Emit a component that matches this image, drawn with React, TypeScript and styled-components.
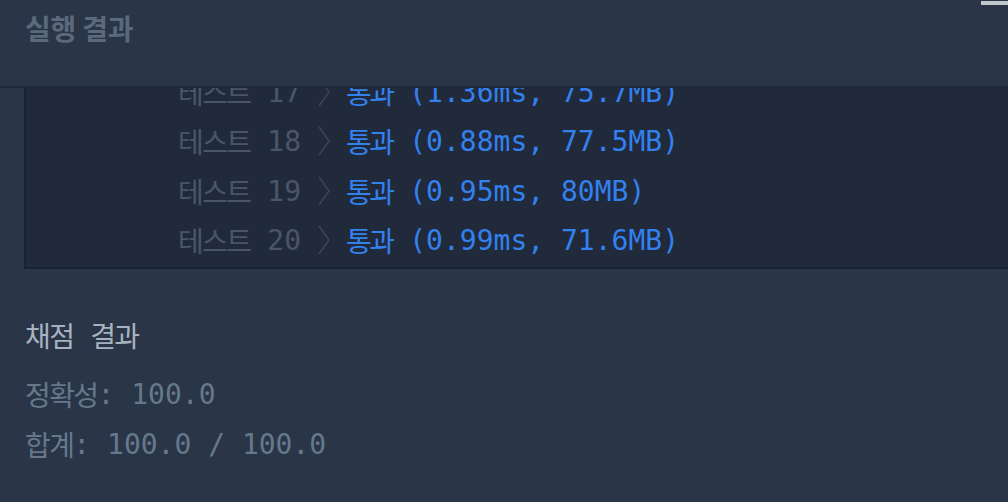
import React from 'react';
import styled, { createGlobalStyle } from 'styled-components';

const GlobalStyle = createGlobalStyle`
    html, body {
        margin: 0;
        padding: 0;
        background: #2a3547;
    }
    #root {
        height: 502px;
        overflow: hidden;
    }
`;

const MONO = `'DejaVu Sans Mono', 'Noto Sans CJK KR', monospace`;

const Page = styled.div`
    position: relative;
    display: flex;
    flex-direction: column;
    width: 1008px;
    height: 502px;
    background: #2a3547;
    overflow: hidden;
`;

const ScrollThumb = styled.div`
    position: absolute;
    top: 1px;
    right: 0;
    width: 27px;
    height: 4px;
    background: #c2c9ce;
`;

const Header = styled.div`
    display: flex;
    align-items: flex-start;
    height: 88px;
    padding: 11px 0 0 25px;
    box-sizing: border-box;
    border-bottom: 2px solid #1f2839;
`;

const Title = styled.h2`
    margin: 0;
    font-family: 'Noto Sans CJK KR', 'Noto Sans', sans-serif;
    font-size: 28px;
    font-weight: 700;
    line-height: 34px;
    color: #5a697b;
    letter-spacing: -0.2px;
`;

const Output = styled.div`
    display: flex;
    flex-direction: column;
    justify-content: flex-end;
    height: 181px;
    margin-left: 24px;
    padding: 0 0 2px 152px;
    box-sizing: border-box;
    background: #212a3b;
    border-left: 2px solid #1b2231;
    border-bottom: 2px solid #1b2231;
    overflow: hidden;
`;

const Row = styled.div`
    display: flex;
    align-items: center;
    flex-shrink: 0;
    height: 49.5px;
    font-family: ${MONO};
    font-size: 28px;
    white-space: pre;
`;

const Hangul = styled.span<{ tight?: boolean }>`
    letter-spacing: ${({ tight }) => (tight ? '-2.6px' : '-1.6px')};
    vertical-align: -2px;
`;

const Label = styled.span`
    color: #4a5668;
`;

const Pass = styled.span`
    color: #3380ef;
`;

const Chevron = styled.svg`
    margin: 0 16px 0 17px;
    flex-shrink: 0;
`;

const Results = styled.div`
    display: flex;
    flex-direction: column;
    padding: 42px 0 0 25px;
    font-family: ${MONO};
    font-size: 28px;
    white-space: pre;
`;

const ResultLine = styled.div<{ tone: string; gap?: number }>`
    height: 50px;
    line-height: 50px;
    margin-bottom: ${({ gap }) => gap ?? 0}px;
    color: ${({ tone }) => tone};
`;

const tests = [
    { no: 17, time: '1.36ms', mem: '75.7MB' },
    { no: 18, time: '0.88ms', mem: '77.5MB' },
    { no: 19, time: '0.95ms', mem: '80MB' },
    { no: 20, time: '0.99ms', mem: '71.6MB' },
];

const Arrow = () => (
    <Chevron width="12" height="30" viewBox="0 0 12 30">
        <path d="M1 1 L11 15 L1 29" fill="none" stroke="#394456" strokeWidth="1.6" />
    </Chevron>
);

export default function App() {
    return (
        <Page>
            <GlobalStyle />
            <ScrollThumb />
            <Header>
                <Title>실행 결과</Title>
            </Header>
            <Output>
                {tests.map(t => (
                    <Row key={t.no}>
                        <Label>
                            <Hangul>테스트</Hangul> {t.no}
                        </Label>
                        <Arrow />
                        <Pass>
                            <Hangul tight>통과</Hangul> ({t.time}, {t.mem})
                        </Pass>
                    </Row>
                ))}
            </Output>
            <Results>
                <ResultLine tone="#a7b2bf" gap={9}>
                    <Hangul>채점</Hangul> <Hangul>결과</Hangul>
                </ResultLine>
                <ResultLine tone="#65798b">
                    <Hangul>정확성</Hangul>: 100.0
                </ResultLine>
                <ResultLine tone="#65798b">
                    <Hangul>합계</Hangul>: 100.0 / 100.0
                </ResultLine>
            </Results>
        </Page>
    );
}
